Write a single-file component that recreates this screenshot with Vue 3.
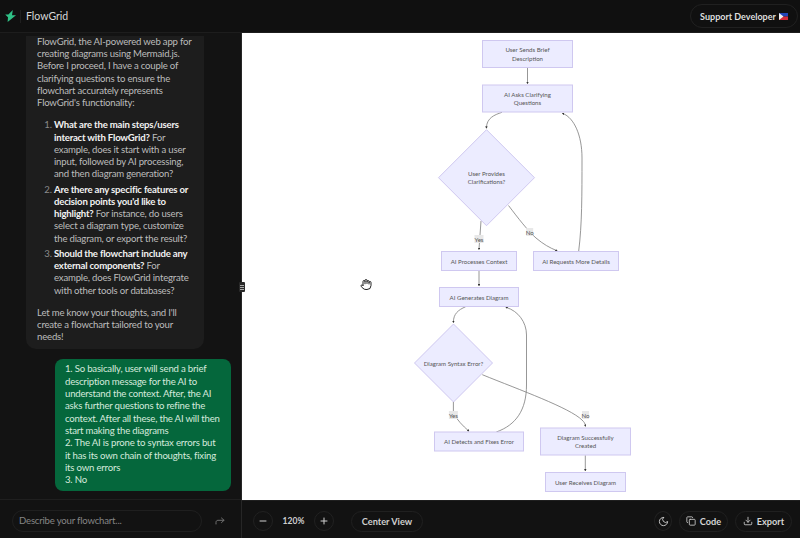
<script setup>
const nodes = [
  { x: 482.5, y: 40.5, w: 90, h: 27, lines: ['User Sends Brief', 'Description'] },
  { x: 482.5, y: 85, w: 90, h: 27, lines: ['AI Asks Clarifying', 'Questions'] },
  { x: 441.5, y: 251.5, w: 75, h: 19, lines: ['AI Processes Context'] },
  { x: 533.5, y: 251.5, w: 85, h: 19, lines: ['AI Requests More Details'] },
  { x: 439.5, y: 287.5, w: 79, h: 19, lines: ['AI Generates Diagram'] },
  { x: 434.5, y: 432, w: 89, h: 19, lines: ['AI Detects and Fixes Error'] },
  { x: 540.5, y: 428, w: 90, h: 27, lines: ['Diagram Successfully', 'Created'] },
  { x: 545.5, y: 472.5, w: 80, h: 19, lines: ['User Receives Diagram'] },
]
const diamonds = [
  { cx: 486.5, cy: 177.7, r: 48, lines: ['User Provides', 'Clarifications?'] },
  { cx: 453.5, cy: 363, r: 39, lines: ['Diagram Syntax Error?'] },
]
const edges = [
  'M527.5 67.7V83',
  'M502 112.3C494 115 487 118 486.4 127.5',
  'M481 221L479 249',
  'M508.5 205.5C518 218 528 231 536 238C543 244 550 248 556.5 250.5',
  'M578.7 251C582 225 582 195 582 158C582 135 574 118 563 113.5',
  'M479 270.7V285.3',
  'M465.7 306.7C458 310 453.5 314 453.4 322',
  'M453.4 402V413C457 420 463 426 468.5 430.8',
  'M496.3 432C516 425 526.5 410 526.5 385V335C526.5 322 518 311 506.5 307.5',
  'M482.3 374.7C520 390 570 408 582 420C584 422 585 423 585.3 425.7',
  'M585.3 455.3V470.3',
]
const labels = [
  { x: 479, y: 239, t: 'Yes', w: 9 },
  { x: 529.7, y: 232, t: 'No', w: 7 },
  { x: 453.4, y: 415, t: 'Yes', w: 9 },
  { x: 585.5, y: 415, t: 'No', w: 7 },
]
const lineY = (y, i, n) => y + (i - (n - 1) / 2) * 8.3
</script>

<template>
  <div class="app">
    <header class="topbar">
      <div class="brand">
        <svg class="logo" viewBox="0 0 12 12" width="12" height="12">
          <path d="M7.8 0L3.4 4.6H0.2L3 7.2L2.6 12L11 5.2H7L7.8 0Z" fill="#2fc287" />
        </svg>
        <span class="brand-name">FlowGrid</span>
      </div>
      <button class="pill support">
        Support Developer
        <svg class="flag" viewBox="0 0 9 7" width="9" height="7">
          <rect width="9" height="3.5" fill="#2146b8" />
          <rect y="3.5" width="9" height="3.5" fill="#d22b3a" />
          <path d="M0 0L4.5 3.5L0 7Z" fill="#f2f2f2" />
        </svg>
      </button>
    </header>

    <div class="body">
      <aside class="sidebar">
        <div class="chat">
          <div class="bubble ai">
            <p>FlowGrid, the AI-powered web app for<br>creating diagrams using Mermaid.js.<br>Before I proceed, I have a couple of<br>clarifying questions to ensure the<br>flowchart accurately represents<br>FlowGrid's functionality:</p>
            <ol>
              <li><b>What are the main steps/users<br>interact with FlowGrid?</b> For<br>example, does it start with a user<br>input, followed by AI processing,<br>and then diagram generation?</li>
              <li><b>Are there any specific features or<br>decision points you'd like to<br>highlight?</b> For instance, do users<br>select a diagram type, customize<br>the diagram, or export the result?</li>
              <li><b>Should the flowchart include any<br>external components?</b> For<br>example, does FlowGrid integrate<br>with other tools or databases?</li>
            </ol>
            <p>Let me know your thoughts, and I'll<br>create a flowchart tailored to your<br>needs!</p>
          </div>
          <div class="bubble user">
            1. So basically, user will send a brief<br>description message for the AI to<br>understand the context. After, the AI<br>asks further questions to refine the<br>context. After all these, the AI will then<br>start making the diagrams<br>2. The AI is prone to syntax errors but<br>it has its own chain of thoughts, fixing<br>its own errors<br>3. No
          </div>
        </div>
        <div class="composer">
          <div class="input">Describe your flowchart...</div>
          <svg class="send" viewBox="0 0 10 8" width="10" height="8" fill="none" stroke="#707070" stroke-width="1" stroke-linecap="round" stroke-linejoin="round">
            <path d="M6.5 1L9 3.3L6.5 5.6" />
            <path d="M9 3.3H3C1.6 3.3 1 4.3 1 5.3V7" />
          </svg>
        </div>
      </aside>

      <main class="main">
        <div class="canvas">
          <svg class="diagram" viewBox="242 33 558 466" width="558" height="466">
            <defs>
              <marker id="arrow" viewBox="0 0 10 10" refX="5" refY="5" markerWidth="3" markerHeight="3" orient="auto">
                <path d="M0 0L10 5L0 10Z" fill="#333" />
              </marker>
            </defs>
            <path v-for="(d, i) in edges" :key="i" :d="d" class="edge" marker-end="url(#arrow)" />
            <g v-for="(n, i) in nodes" :key="'n' + i">
              <rect :x="n.x" :y="n.y" :width="n.w" :height="n.h" class="shape" />
              <text v-for="(l, j) in n.lines" :key="j" :x="n.x + n.w / 2" :y="lineY(n.y + n.h / 2, j, n.lines.length)" class="node-text">{{ l }}</text>
            </g>
            <g v-for="(d, i) in diamonds" :key="'d' + i">
              <path :d="`M${d.cx} ${d.cy - d.r}L${d.cx + d.r} ${d.cy}L${d.cx} ${d.cy + d.r}L${d.cx - d.r} ${d.cy}Z`" class="shape" />
              <text v-for="(l, j) in d.lines" :key="j" :x="d.cx" :y="lineY(d.cy, j, d.lines.length)" class="node-text">{{ l }}</text>
            </g>
            <g v-for="(l, i) in labels" :key="'l' + i">
              <rect :x="l.x - l.w / 2" :y="l.y - 4" :width="l.w" height="8" class="label-bg" />
              <text :x="l.x" :y="l.y" class="node-text">{{ l.t }}</text>
            </g>
          </svg>
          <svg class="hand" viewBox="0 0 24 24" width="12" height="13" fill="#fff" stroke="#222" stroke-width="2" stroke-linecap="round" stroke-linejoin="round">
            <path d="M18 11V6a2 2 0 0 0-4 0M14 10V4a2 2 0 0 0-4 0v2M10 10.5V6a2 2 0 0 0-4 0v8M18 8a2 2 0 1 1 4 0v6a8 8 0 0 1-8 8h-2c-2.8 0-4.5-.9-6-2.4l-3.6-3.6a2 2 0 0 1 2.8-2.8L6 14" />
          </svg>
        </div>
        <div class="toolbar">
          <div class="group">
            <button class="round">
              <svg viewBox="0 0 8 8" width="8" height="8"><path d="M1 4H7" stroke="#cfcfcf" stroke-width="1" stroke-linecap="round" /></svg>
            </button>
            <span class="zoom">120%</span>
            <button class="round">
              <svg viewBox="0 0 8 8" width="8" height="8"><path d="M1 4H7M4 1V7" stroke="#cfcfcf" stroke-width="1" stroke-linecap="round" /></svg>
            </button>
            <button class="pill center">Center View</button>
          </div>
          <div class="group right">
            <button class="round moon">
              <svg viewBox="0 0 24 24" width="11" height="11" fill="none" stroke="#cfcfcf" stroke-width="2" stroke-linecap="round" stroke-linejoin="round"><path d="M12 3a6 6 0 0 0 9 9 9 9 0 1 1-9-9Z" /></svg>
            </button>
            <button class="pill action code">
              <svg viewBox="0 0 24 24" width="10" height="10" fill="none" stroke="#cfcfcf" stroke-width="2" stroke-linecap="round" stroke-linejoin="round"><rect x="8" y="8" width="14" height="14" rx="2" /><path d="M4 16a2 2 0 0 1-2-2V4a2 2 0 0 1 2-2h10a2 2 0 0 1 2 2" /></svg>
              Code
            </button>
            <button class="pill action export">
              <svg viewBox="0 0 24 24" width="10" height="10" fill="none" stroke="#cfcfcf" stroke-width="2" stroke-linecap="round" stroke-linejoin="round"><path d="M12 3v12M7 10l5 5 5-5M21 15v4a2 2 0 0 1-2 2H5a2 2 0 0 1-2-2v-4" /></svg>
              Export
            </button>
          </div>
        </div>
      </main>
    </div>
    <div class="handle"><i></i><i></i><i></i></div>
  </div>
</template>

<style>
html, body { margin: 0; background: #111; }
</style>

<style scoped>
.app {
  position: relative;
  width: 800px;
  height: 538px;
  overflow: hidden;
  display: flex;
  flex-direction: column;
  background: #111;
  font-family: Lato, "Noto Sans", sans-serif;
  font-size: 9.6px;
  letter-spacing: -0.2px;
  color: #d4d4d4;
}
button { font: inherit; color: inherit; background: none; cursor: pointer; padding: 0; letter-spacing: inherit; }
.topbar {
  height: 32px;
  flex: none;
  display: flex;
  align-items: center;
  justify-content: space-between;
  padding: 0 2px 0 5px;
  border-bottom: 1px solid #1d1d1d;
  background: #101010;
}
.brand { display: flex; align-items: center; }
.logo { margin-right: 3px; margin-top: 0; }
.brand-name { border-left: 1px solid #1f1f1f; padding-left: 5px; font-size: 10.5px; line-height: 13px; color: #d8d8d8; letter-spacing: 0; }
.pill { border: 1px solid #202020; border-radius: 12px; display: flex; align-items: center; justify-content: center; }
.support { width: 108px; height: 24px; gap: 3px; font-weight: 700; font-size: 9px; color: #dedede; letter-spacing: 0; }
.body { flex: 1; display: flex; min-height: 0; }
.sidebar {
  width: 241px;
  flex: none;
  display: flex;
  flex-direction: column;
  border-right: 1px solid #262626;
  background: #131313;
}
.chat {
  flex: 1;
  min-height: 0;
  overflow: hidden;
  display: flex;
  flex-direction: column;
  justify-content: flex-end;
  gap: 10px;
  padding: 0 10px 8px 26px;
}
.bubble { line-height: 12.33px; white-space: nowrap; flex: none; box-sizing: border-box; }
.ai { width: 178px; background: #1d1d1d; border-radius: 0 0 10px 10px; padding: 0 11px 5px; color: #bcbcbc; }
.ai p { margin: 0; }
.ai ol { margin: 9.6px 0; padding: 0 0 0 17px; }
.ai li { margin-top: 2.7px; }
.ai li::marker { color: #8a8a8a; }
.ai b { color: #f2f2f2; font-weight: 700; }
.user { width: 176px; margin-left: 29px; background: #05673c; border-radius: 8px; padding: 4.5px 10px; color: #d5eadd; }
.composer {
  height: 38px;
  flex: none;
  display: flex;
  align-items: center;
  padding: 0 0 0 12px;
  border-top: 1px solid #1f1f1f;
  background: #121212;
}
.input { width: 182px; height: 20px; line-height: 20px; padding-left: 6px; border: 1px solid #1f1f1f; border-radius: 11px; color: #858585; margin-top: 3px; }
.send { margin-left: 13px; margin-top: 3px; }
.main { flex: 1; min-width: 0; display: flex; flex-direction: column; }
.canvas { position: relative; flex: 1; min-height: 0; background: #fff; overflow: hidden; }
.diagram { display: block; }
.shape { fill: #ececff; stroke: #cfc8f0; stroke-width: 1; }
.edge { fill: none; stroke: #7c7c7c; stroke-width: .8; }
.node-text { font-size: 6.1px; letter-spacing: 0; fill: #555; text-anchor: middle; dominant-baseline: central; font-family: Lato, "Noto Sans", sans-serif; }
.label-bg { fill: #e8e8e8; }
.hand { position: absolute; left: 118px; top: 245px; }
.toolbar {
  height: 38px;
  flex: none;
  display: flex;
  align-items: center;
  justify-content: space-between;
  padding: 3px 8px 0 11px;
  box-sizing: border-box;
  border-top: 1px solid #1f1f1f;
  background: #121212;
}
.group { display: flex; align-items: center; }
.round { width: 20px; height: 20px; border: 1px solid #212121; border-radius: 50%; display: flex; align-items: center; justify-content: center; }
.zoom { width: 41px; text-align: center; font-size: 8.5px; font-weight: 700; color: #cfcfcf; letter-spacing: 0; }
.center { width: 72px; height: 21px; margin-left: 17px; font-weight: 700; font-size: 9.2px; color: #cfcfcf; letter-spacing: 0; }
.moon { margin-right: 7px; width: 18px; }
.action { height: 21px; gap: 4px; font-weight: 700; font-size: 9.2px; color: #d4d4d4; letter-spacing: 0; box-sizing: border-box; }
.code { width: 49px; }
.export { width: 57px; margin-left: 7px; }
.handle {
  position: absolute;
  left: 239px;
  top: 282px;
  width: 6px;
  height: 10px;
  background: #2a2a2a;
  border-radius: 1px;
  display: flex;
  flex-direction: column;
  align-items: center;
  justify-content: center;
  gap: 1px;
}
.handle i { display: block; width: 4px; height: 1px; background: #aaa; }
</style>
